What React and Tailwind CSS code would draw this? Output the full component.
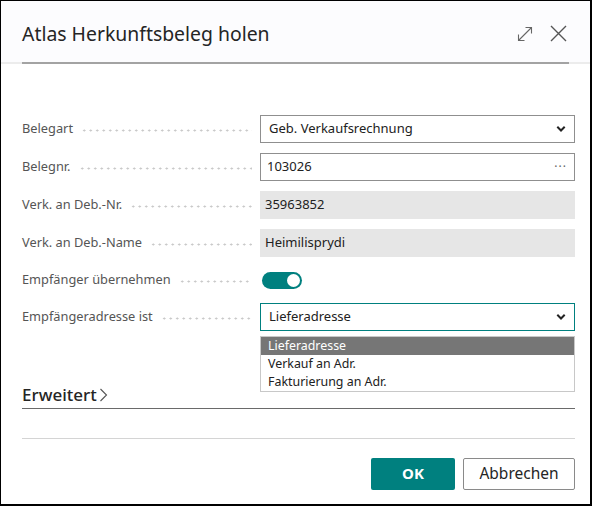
import React from "react";

const dots =
  "flex-1 h-[3px] mx-2 mt-[3px] bg-[radial-gradient(circle,_#c8c8c8_0.9px,_transparent_1.2px)] bg-[length:6.5px_3px] bg-repeat-x";

function Chevron() {
  return (
    <svg width="10" height="8" viewBox="0 0 10 8" className="shrink-0">
      <path d="M1.3 1.8 L5 5.5 L8.7 1.8" fill="none" stroke="#222" strokeWidth="2" />
    </svg>
  );
}

function Row({ label, children }) {
  return (
    <div className="flex h-[28px] items-center">
      <div className="flex w-[238px] items-center">
        <span className="whitespace-nowrap text-[12.8px] text-[#555]">{label}</span>
        <span className={dots} />
      </div>
      <div className="relative flex-1">{children}</div>
    </div>
  );
}

export default function App() {
  return (
    <div className="flex h-[506px] w-[592px] flex-col border border-r-2 border-b-2 border-black bg-white font-['Noto_Sans','Open_Sans',sans-serif] text-[#212121]">
      <header className="relative bg-[#fcfcfe]">
        <div className="flex h-[61px] items-center justify-between pl-[21px] pr-[23px] pt-[4px]">
          <h1 className="text-[19.4px] text-[#252525]">Atlas Herkunftsbeleg holen</h1>
          <div className="flex items-center gap-[17px]">
            <svg width="16" height="16" viewBox="0 0 16 16">
              <path
                d="M1.5 14.5 L14.5 1.5 M8.5 1.5 H14.5 V7.5 M1.5 8.5 V14.5 H7.5"
                fill="none"
                stroke="#666"
                strokeWidth="1.1"
              />
            </svg>
            <svg width="17" height="17" viewBox="0 0 17 17">
              <path d="M1 1 L16 16 M16 1 L1 16" fill="none" stroke="#555" strokeWidth="1.4" />
            </svg>
          </div>
        </div>
        <div className="h-[2px] bg-[#ececec]">
          <div className="mx-[21px] h-[2px] bg-[#a3a3a3]" />
        </div>
      </header>

      <main className="flex flex-1 flex-col pl-[21px] pr-[15px] pt-[51px]">
        <div className="flex flex-col gap-[10px]">
          <Row label="Belegart">
            <div className="flex h-[28px] items-center justify-between border border-[#8f8f8f] pl-[8px] pr-[8px] text-[13px]">
              <span>Geb. Verkaufsrechnung</span>
              <Chevron />
            </div>
          </Row>
          <Row label="Belegnr.">
            <div className="flex h-[28px] items-center justify-between border border-[#8f8f8f] pl-[6px] pr-[7px] text-[13px]">
              <span>103026</span>
              <span className="text-[12px] tracking-[1px] text-[#666]">···</span>
            </div>
          </Row>
          <Row label="Verk. an Deb.-Nr.">
            <div className="flex h-[28px] items-center bg-[#e6e6e6] pl-[5px] text-[13px]">35963852</div>
          </Row>
          <Row label="Verk. an Deb.-Name">
            <div className="flex h-[28px] items-center bg-[#e6e6e6] pl-[5px] text-[13px]">Heimilisprydi</div>
          </Row>
          <div className="-my-[1px]">
            <Row label="Empfänger übernehmen">
              <div className="ml-[2px] flex h-[17px] w-[40px] items-center justify-end rounded-full bg-[#00807f] pr-[2px]">
                <div className="h-[13px] w-[13px] rounded-full bg-white" />
              </div>
            </Row>
          </div>
          <Row label="Empfängeradresse ist">
            <div className="flex h-[28px] items-center justify-between border border-[#00807f] pl-[8px] pr-[8px] text-[13px]">
              <span>Lieferadresse</span>
              <Chevron />
            </div>
            <ul className="absolute left-0 right-0 top-[33px] z-10 border border-[#c8c8c8] bg-white text-[12.4px] leading-[18px]">
              <li className="bg-[#767676] px-[7px] text-white">Lieferadresse</li>
              <li className="px-[7px]">Verkauf an Adr.</li>
              <li className="px-[7px]">Fakturierung an Adr.</li>
            </ul>
          </Row>
        </div>

        <div className="mt-[51px] flex items-center gap-[2px] text-[17px] font-medium text-[#252525]">
          <span>Erweitert</span>
          <svg width="9" height="14" viewBox="0 0 9 14">
            <path d="M1.5 1 L7.5 7 L1.5 13" fill="none" stroke="#555" strokeWidth="1.1" />
          </svg>
        </div>
        <div className="h-px bg-[#6a6a6a]" />
        <div className="mt-[29px] h-px bg-[#d4d4d4]" />

        <div className="mt-[19px] flex justify-end gap-[8px]">
          <button className="h-[32px] w-[84px] rounded-[2px] bg-[#00807f] text-[15px] font-bold text-white">
            OK
          </button>
          <button className="h-[32px] w-[112px] rounded-[2px] border border-[#8a8a8a] bg-white text-[15.5px] text-[#252525]">
            Abbrechen
          </button>
        </div>
      </main>
    </div>
  );
}
